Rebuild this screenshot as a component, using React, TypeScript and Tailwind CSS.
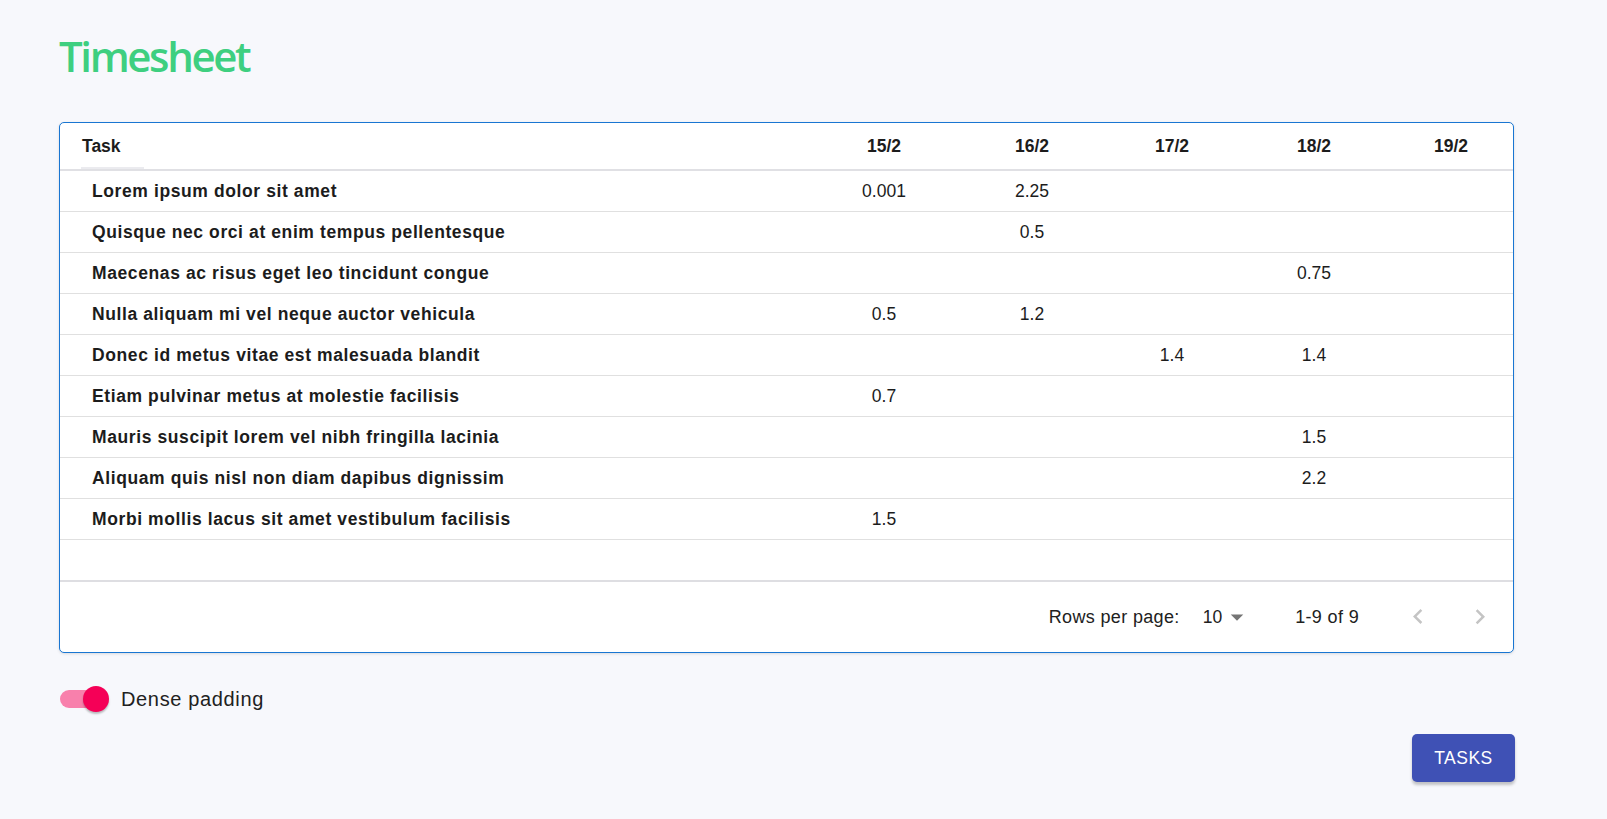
import React from "react";

const dates = ["15/2", "16/2", "17/2", "18/2", "19/2"];

const rows: { task: string; values: (string | null)[] }[] = [
  { task: "Lorem ipsum dolor sit amet", values: ["0.001", "2.25", null, null, null] },
  { task: "Quisque nec orci at enim tempus pellentesque", values: [null, "0.5", null, null, null] },
  { task: "Maecenas ac risus eget leo tincidunt congue", values: [null, null, null, "0.75", null] },
  { task: "Nulla aliquam mi vel neque auctor vehicula", values: ["0.5", "1.2", null, null, null] },
  { task: "Donec id metus vitae est malesuada blandit", values: [null, null, "1.4", "1.4", null] },
  { task: "Etiam pulvinar metus at molestie facilisis", values: ["0.7", null, null, null, null] },
  { task: "Mauris suscipit lorem vel nibh fringilla lacinia", values: [null, null, null, "1.5", null] },
  { task: "Aliquam quis nisl non diam dapibus dignissim", values: [null, null, null, "2.2", null] },
  { task: "Morbi mollis lacus sit amet vestibulum facilisis", values: ["1.5", null, null, null, null] },
];

const grid = "grid grid-cols-[749px_150px_146px_134px_150px_1fr]";
const arial = "font-['Liberation_Sans',Arial,sans-serif]";

export default function App() {
  return (
    <div className={`min-h-screen w-full bg-[#f7f8fc] pl-[59px] pt-[30px] ${arial}`}>
      <h1 className="h-[52px] text-[42px] leading-[52px] font-semibold tracking-[-2.4px] text-[#3ecf80] font-['Open_Sans',sans-serif]">
        Timesheet
      </h1>

      <div className="mt-[40px] w-[1455px] overflow-hidden rounded-[5px] border border-[#1976d2] bg-white shadow-[0_1px_3px_rgba(0,0,0,0.12)]">
        {/* header */}
        <div className={`${grid} relative h-[48px] items-center border-b-2 border-[#e0e0e4] text-[17.5px] font-bold text-[#1c1c1c]`}>
          <div className="pl-[22px]">Task</div>
          {dates.map((d) => (
            <div key={d} className="text-center">
              {d}
            </div>
          ))}
          <div className="absolute bottom-0 left-[21px] h-[2px] w-[63px] bg-[#ebebef]" />
        </div>

        {/* rows */}
        {rows.map((r) => (
          <div
            key={r.task}
            className={`${grid} h-[41px] items-center border-b border-[#e0e0e0] text-[17.5px] text-[#1c1c1c]`}
          >
            <div className="pl-[32px] font-bold tracking-[0.6px]">{r.task}</div>
            {r.values.map((v, i) => (
              <div key={i} className="text-center">
                {v ?? ""}
              </div>
            ))}
          </div>
        ))}

        {/* empty row */}
        <div className="h-[42px] border-b-2 border-[#dedee2]" />

        {/* pagination */}
        <div className="flex h-[70px] items-center justify-end pr-[18px] text-[18px] tracking-[0.35px] text-[#212121]">
          <span>Rows per page:</span>
          <span className="ml-[23px] text-[17.5px] tracking-normal">10</span>
          <svg viewBox="0 0 24 24" className="h-[30px] w-[30px] fill-[#757575]">
            <path d="M7 10l5 5 5-5z" />
          </svg>
          <span className="ml-[43px]">1-9 of 9</span>
          <svg viewBox="0 0 24 24" className="ml-[44px] h-[30px] w-[30px] fill-[#c4c4c4]">
            <path d="M15.41 16.09l-4.58-4.59 4.58-4.59L14 5.5l-6 6 6 6z" />
          </svg>
          <svg viewBox="0 0 24 24" className="ml-[32px] h-[30px] w-[30px] fill-[#c4c4c4]">
            <path d="M8.59 16.34l4.58-4.59-4.58-4.59L10 5.75l6 6-6 6z" />
          </svg>
        </div>
      </div>

      {/* switch */}
      <div className="mt-[22px] flex h-[48px] items-center">
        <div className="relative ml-[1px] h-[26px] w-[50px]">
          <div className="absolute left-0 top-[4px] h-[18px] w-[43px] rounded-full bg-[#f880ac]" />
          <div className="absolute left-[23px] top-0 h-[26px] w-[26px] rounded-full bg-[#f50057] shadow-[0_2px_2px_rgba(0,0,0,0.25)]" />
        </div>
        <span className="ml-[11px] text-[20px] tracking-[0.65px] text-[#212121]">Dense padding</span>
      </div>

      {/* button */}
      <div className="mt-[11px] flex w-[1456px] justify-end">
        <button className="h-[48px] w-[103px] rounded-[5px] bg-[#3f51b5] text-[17.5px] tracking-[0.5px] text-white shadow-[0_3px_3px_rgba(0,0,0,0.22)]">
          TASKS
        </button>
      </div>
    </div>
  );
}
